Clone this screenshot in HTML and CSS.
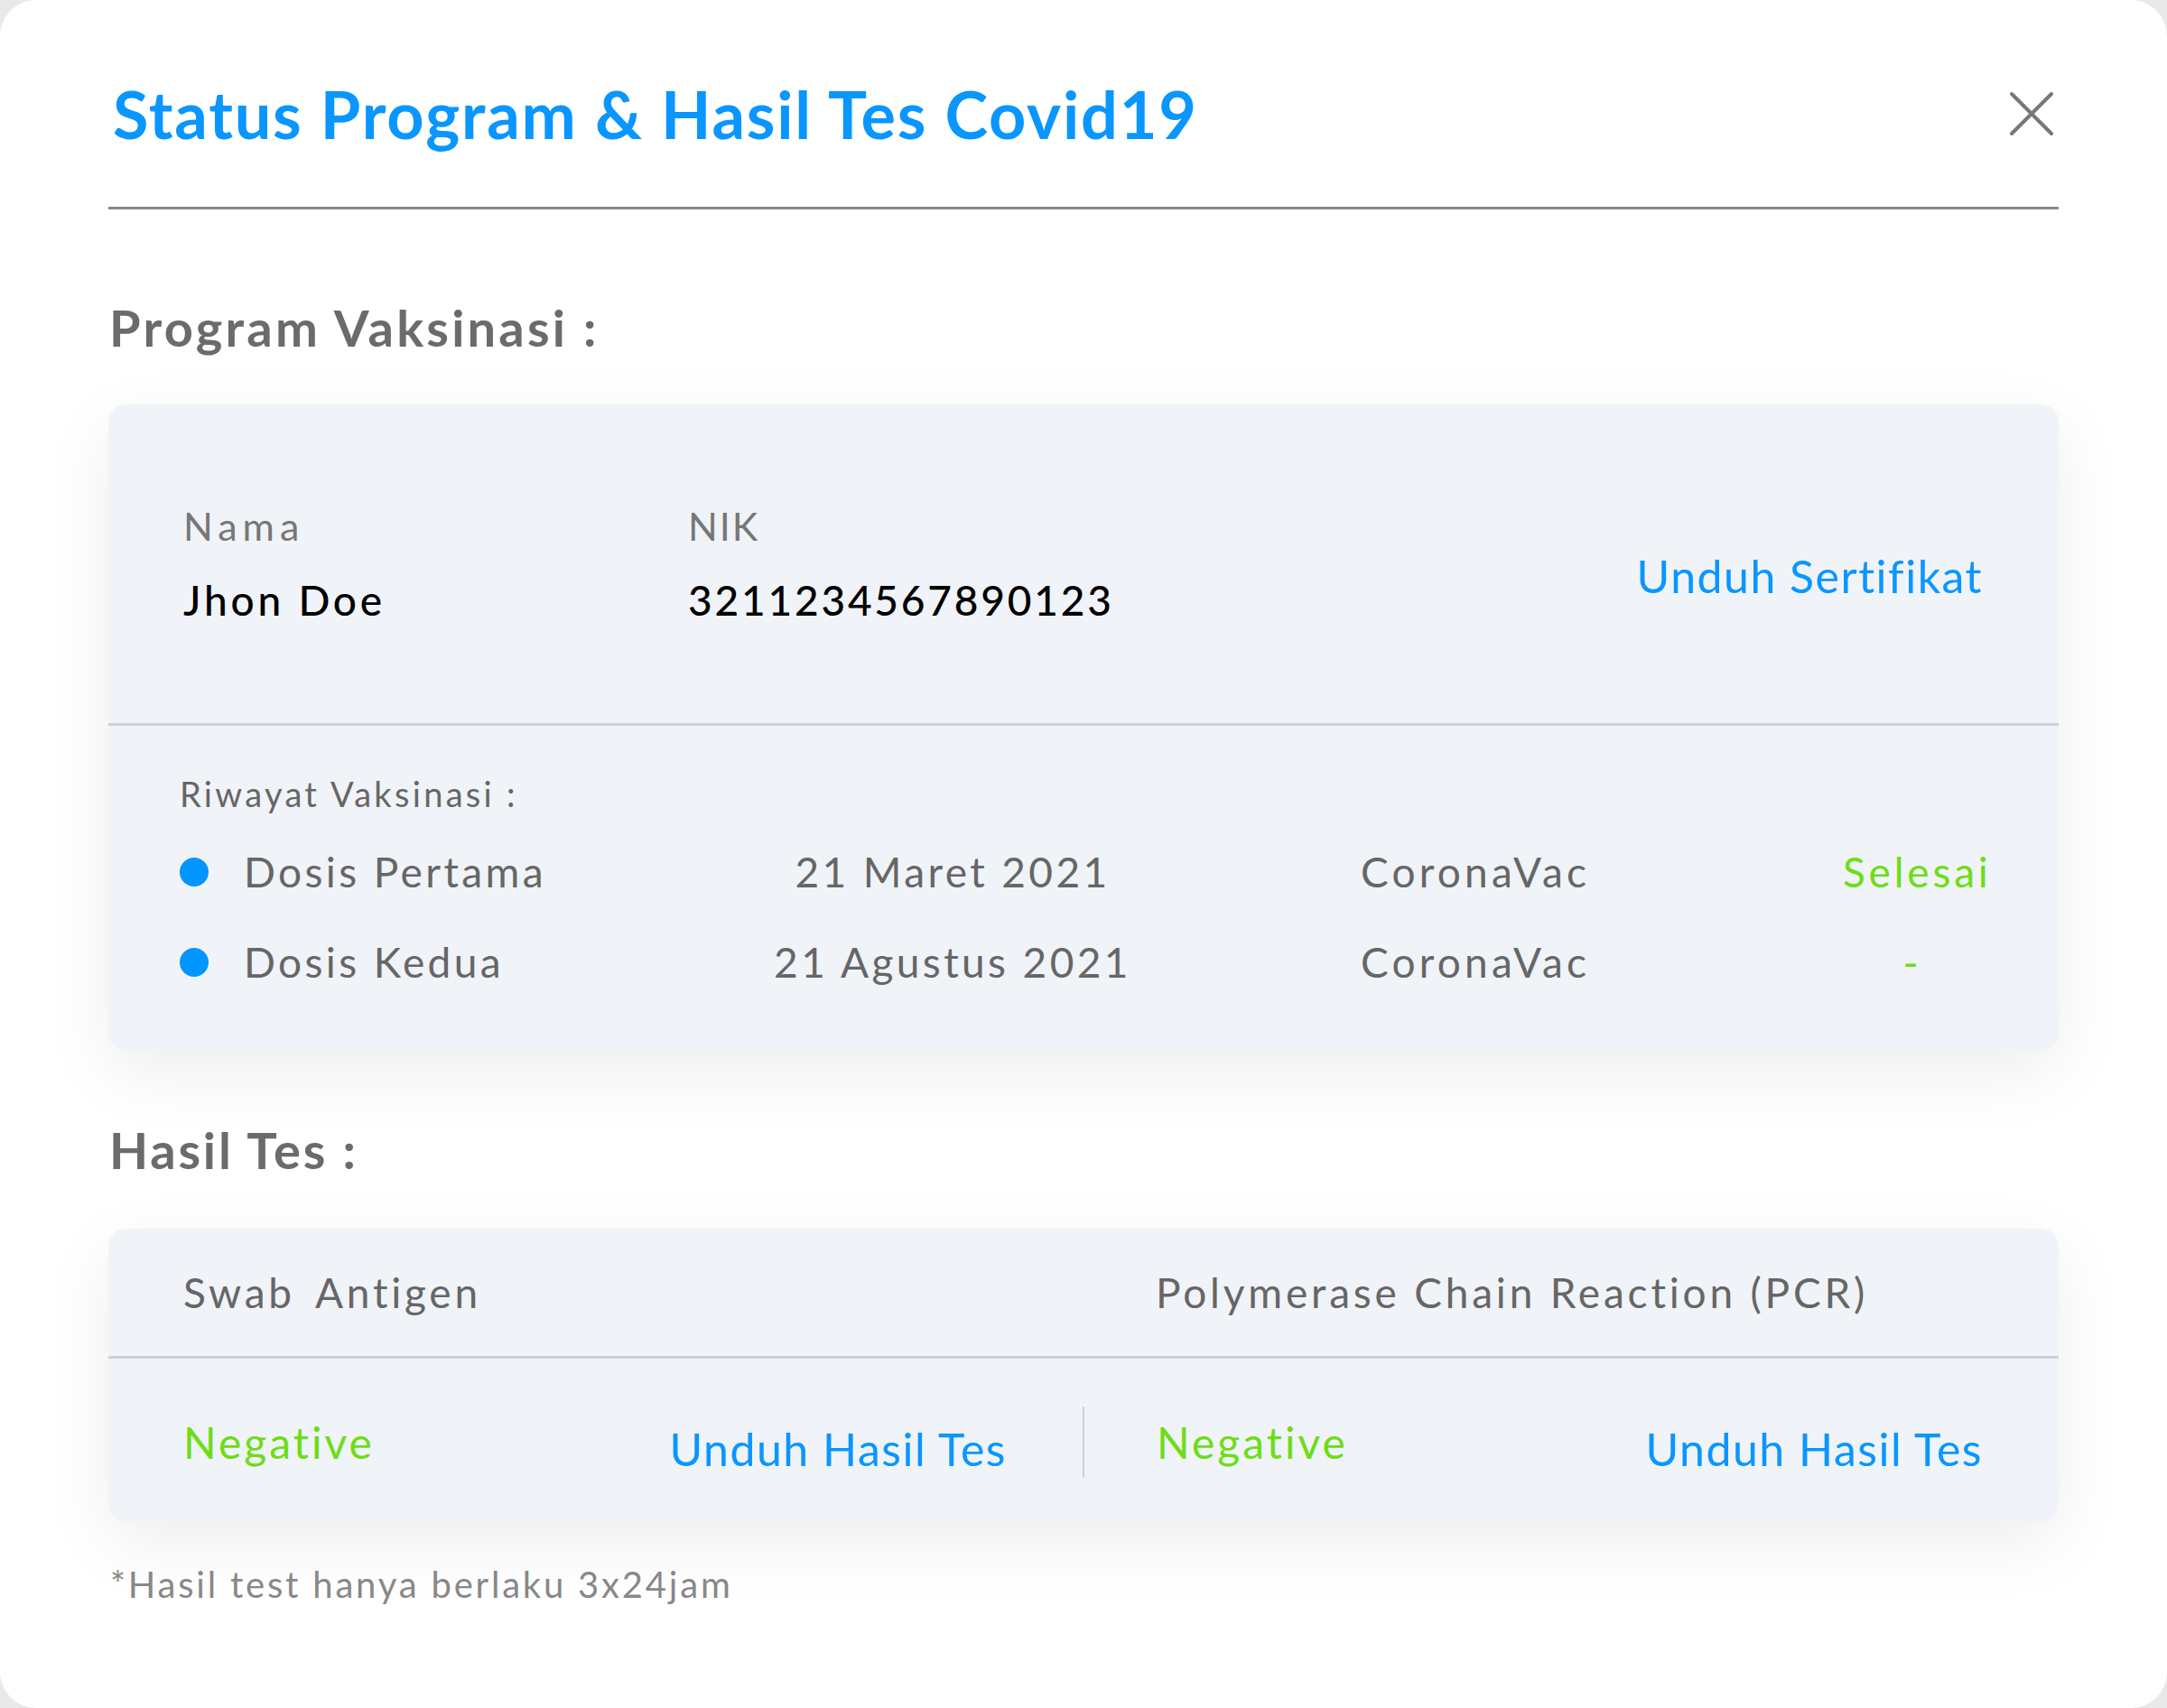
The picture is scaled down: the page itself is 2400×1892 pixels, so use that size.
FILE: index.html
```html
<!DOCTYPE html>
<html lang="id">
<head>
<meta charset="utf-8">
<title>Status Program & Hasil Tes Covid19</title>
<link rel="stylesheet" href="styles.css">
</head>
<body>
<div class="modal">
  <header class="modal-header">
    <h1 class="modal-title">Status Program &amp; Hasil Tes Covid19</h1>
    <button class="close-btn" aria-label="Tutup">
      <svg viewBox="0 0 50 50" width="50" height="50"><path d="M3 3 L47 47 M47 3 L3 47" stroke="#777" stroke-width="4" stroke-linecap="round" fill="none"/></svg>
    </button>
  </header>

  <h2 class="section-title first">Program Vaksinasi :</h2>
  <section class="card">
    <div class="identity">
      <div class="field name-field">
        <div class="label">Nama</div>
        <div class="value">Jhon Doe</div>
      </div>
      <div class="field">
        <div class="label">NIK</div>
        <div class="value nik">3211234567890123</div>
      </div>
      <a class="link cert-link">Unduh Sertifikat</a>
    </div>
    <div class="history">
      <div class="history-title">Riwayat Vaksinasi :</div>
      <div class="dose-row">
        <div class="dose-name"><span class="dot"></span>Dosis Pertama</div>
        <div class="dose-date">21 Maret 2021</div>
        <div class="dose-vac">CoronaVac</div>
        <div class="dose-status">Selesai</div>
      </div>
      <div class="dose-row">
        <div class="dose-name"><span class="dot"></span>Dosis Kedua</div>
        <div class="dose-date">21 Agustus 2021</div>
        <div class="dose-vac">CoronaVac</div>
        <div class="dose-status">-</div>
      </div>
    </div>
  </section>

  <h2 class="section-title second">Hasil Tes :</h2>
  <section class="card tests">
    <div class="tests-head">
      <div class="half left">Swab Antigen</div>
      <div class="half right">Polymerase Chain Reaction (PCR)</div>
    </div>
    <div class="tests-body">
      <div class="half left result">
        <span class="negative">Negative</span>
        <a class="link">Unduh Hasil Tes</a>
      </div>
      <div class="vsep"></div>
      <div class="half right result">
        <span class="negative">Negative</span>
        <a class="link">Unduh Hasil Tes</a>
      </div>
    </div>
  </section>

  <p class="footnote">*Hasil test hanya berlaku 3x24jam</p>
</div>
</body>
</html>
```

FILE: styles.css
```css
* { box-sizing: border-box; }
html, body { margin: 0; padding: 0; }
body {
  background: #e9e9e9;
  font-family: "Lato", "Noto Sans", sans-serif;
}
.modal {
  width: 2400px;
  height: 1892px;
  background: #ffffff;
  border-radius: 40px;
  padding: 0 120px;
}
.modal-header {
  height: 232px;
  padding-top: 23px;
  display: flex;
  align-items: center;
  justify-content: space-between;
  border-bottom: 3px solid #888888;
}
.modal-title {
  margin: 0;
  font-size: 72px;
  font-weight: 700;
  color: #0a96ff;
  line-height: 1;
  padding-left: 5px;
  letter-spacing: 1.8px;
}
.close-btn {
  width: 50px;
  height: 50px;
  margin-right: 5px;
  padding: 0;
  border: 0;
  background: transparent;
  display: flex;
}
.section-title {
  margin: 0;
  font-size: 56px;
  font-weight: 700;
  color: #6b6b6b;
  line-height: 1;
  padding-left: 1px;
  letter-spacing: 3.2px;
}
.section-title.first { margin-top: 103px; margin-bottom: 57px; }
.section-title.second { margin-top: 82px; margin-bottom: 59px; letter-spacing: 2.8px; }
.card {
  background: #f0f3f8;
  border-radius: 20px;
  box-shadow: 0 24px 80px rgba(0, 0, 0, 0.07);
}
.identity {
  height: 356px;
  display: flex;
  align-items: center;
  padding: 0 84px 0 83px;
  border-bottom: 3px solid #cdd0d6;
}
.field { display: flex; flex-direction: column; gap: 38px; }
.name-field { width: 559px; }
.label { font-size: 43px; color: #777777; line-height: 1; letter-spacing: 2px; }
.name-field .label { letter-spacing: 6px; }
.value { font-size: 46px; color: #000000; line-height: 1; font-weight: 500; letter-spacing: 3.8px; }
.value.nik { letter-spacing: 2.8px; }
.link { color: #0a96ff; font-size: 50px; line-height: 1; letter-spacing: 1.5px; }
.cert-link { margin-left: auto; margin-top: 26px; }
.history {
  height: 360px;
  padding: 56px 84px 0 79px;
}
.history-title { font-size: 38px; color: #666666; line-height: 1; margin-bottom: 18px; letter-spacing: 3.3px; }
.dose-row {
  display: grid;
  grid-template-columns: 580px 552px 710px 154px;
  align-items: center;
  height: 100px;
  font-size: 46px;
  color: #666666;
  line-height: 1;
  letter-spacing: 3.4px;
}
.dose-name { display: flex; align-items: center; gap: 39px; }
.dot { width: 32px; height: 32px; border-radius: 50%; background: #0095ff; flex: none; }
.dose-date { text-align: center; }
.dose-vac { padding-left: 176px; letter-spacing: 4.2px; }
.dose-status { text-align: center; color: #6ddd17; letter-spacing: 3.8px; }
.tests-head {
  height: 144px;
  display: flex;
  align-items: center;
  border-bottom: 3px solid #cdd0d6;
  font-size: 46px;
  color: #666666;
  line-height: 1;
  letter-spacing: 3.8px;
}
.tests-head .half.left { word-spacing: 8px; }
.half.left { width: 1080px; padding-left: 83px; }
.half.right { flex: 1; padding-left: 80px; }
.tests-body {
  height: 180px;
  display: flex;
  align-items: center;
}
.result {
  display: flex;
  align-items: center;
  justify-content: space-between;
  padding-right: 84px;
  margin-top: 20px;
}
.half.left.result { width: 1079px; }
.negative { color: #6ddd17; font-size: 48px; line-height: 1; margin-top: -14px; letter-spacing: 3px; }
.vsep { width: 2px; height: 79px; background: #cfd2d8; flex: none; margin-top: 4px; }
.footnote {
  margin: 50px 0 0;
  font-size: 40px;
  color: #888888;
  line-height: 1;
  padding-left: 2px;
  letter-spacing: 2.8px;
}
```
